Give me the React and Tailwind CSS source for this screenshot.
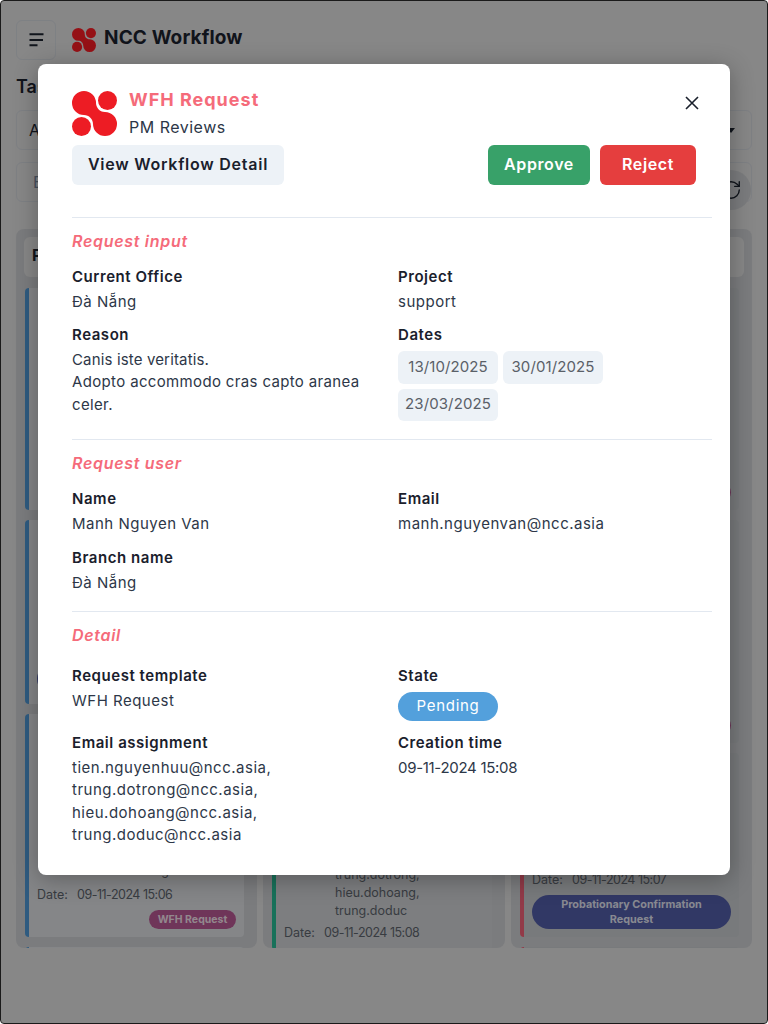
import { RefreshCw } from 'lucide-react'

function Logo({ size }) {
  return (
    <svg width={size} height={size} viewBox="0 0 45 45" className="shrink-0" fill="#ed1c24">
      <path d="M12 0A12 12 0 0 1 24 12C24 16 27 21 33 21A12 12 0 1 1 21 33C21 28 17 24 12 24A12 12 0 1 1 12 0Z" />
      <circle cx="35.5" cy="9.5" r="9.5" />
      <circle cx="9.5" cy="35.5" r="9.5" />
    </svg>
  )
}

const LEFT_ASSIGN = ['trung.dotrong,', 'trung.doduc,', 'tien.nguyenhuu,', 'hieu.dohoang']
const MID_ASSIGN = ['tien.nguyenhuu,', 'trung.dotrong,', 'hieu.dohoang,', 'trung.doduc']

// Only the lower part of each card shows past the dialog
function Card({ height, bar, bg, assign, assignGap = 'mb-[6px]', date, pill }) {
  return (
    <div className={`${height} ${bar} ${bg} shrink-0 rounded-[4px] border-l-4 px-2 pb-2 flex flex-col justify-end text-[12.5px] leading-[18px] text-[#5a5f68]`}>
      {assign && (
        <div className={`flex ${assignGap}`}>
          <span className="w-[51px]" />
          <div>{assign.map(a => <div key={a}>{a}</div>)}</div>
        </div>
      )}
      {date && (
        <div className="flex">
          <span className="w-[40px]">Date:</span>
          <span className="tracking-[-0.5px]">{date}</span>
        </div>
      )}
      {pill}
    </div>
  )
}

const WfhPill = (
  <div className="self-end mt-[6px] h-[19px] w-[87px] rounded-full bg-[#b0558e] text-center text-[10.5px] leading-[19px] font-bold text-[#e8d8e0]">WFH Request</div>
)
const ProbationPill = (
  <div className="mt-[6px] rounded-full bg-[#4f5aa0] px-4 py-[2px] text-center text-[10.8px] leading-[15px] font-bold text-[#d8dae6]">Probationary Confirmation Request</div>
)

function Field({ label, className = 'mb-[11px]', children }) {
  return (
    <div className={className}>
      <div className="text-[15px] leading-6 font-semibold tracking-[0.55px] text-[#1a202c]">{label}</div>
      <div className="mt-[2px] text-[15px] leading-[22.5px] tracking-[0.5px] text-[#2d3748]">{children}</div>
    </div>
  )
}

function DateTag({ className = '', children }) {
  return (
    <span className={`${className} flex w-[100px] items-center justify-center rounded-[6px] bg-[#edf2f7] text-[15px] tracking-[0.1px] text-[#5a6068]`}>
      {children}
    </span>
  )
}

function SectionTitle({ className = '', children }) {
  return (
    <h3 className={`${className} text-[16px] leading-6 font-semibold italic tracking-[0.7px] text-[#f56b7a]`}>{children}</h3>
  )
}

export default function App() {
  return (
    <div className="relative h-[1024px] w-[768px] overflow-hidden rounded-[4px] border border-[#1a1a1a] bg-[#d6d6d6] font-[Inter,sans-serif]">
      {/* Page behind the dialog */}
      <div className="flex h-full flex-col px-[15px] pt-[19px] text-[#1a202c]">
        <div className="flex items-center">
          <button className="flex h-10 w-10 items-center justify-center rounded-[6px] border border-[#c8ccd2]">
            <svg width="16" height="16" viewBox="0 0 16 16" fill="none" stroke="#1a202c" strokeWidth="2">
              <path d="M1.5 2.3h14M1.5 8h13.5M1.5 13.3h8" />
            </svg>
          </button>
          <div className="ml-4 flex items-center gap-2">
            <Logo size={24} />
            <span className="mb-1 text-[19px] font-bold tracking-[0.15px]">NCC Workflow</span>
          </div>
        </div>
        <h1 className="mt-[15px] text-[18px] leading-6 font-semibold">Tasks</h1>
        <div className="mt-[11px] flex h-10 items-center justify-between rounded-[6px] border border-[#c8ccd2] pl-3 pr-4 text-[16px]">
          <span>All</span>
          <svg width="8" height="5" viewBox="0 0 8 5" fill="#1a202c"><path d="M0 0h8L4 5Z" /></svg>
        </div>
        <div className="relative mt-3 flex h-10 items-center rounded-[6px] border border-[#c8ccd2] pl-4 text-[16px] text-[#718096]">
          <span>Email</span>
          <button className="absolute right-0 top-[7px] flex h-10 w-10 items-center justify-center rounded-full bg-[#c3c5c8] text-[#1a202c]">
            <RefreshCw size={22} strokeWidth={1.5} />
          </button>
        </div>
        <div className="mt-[27px] grid h-[719px] grid-cols-[241px_242px_241px] gap-[6px] overflow-hidden">
          <div className="flex flex-col gap-[10px] overflow-hidden rounded-[8px] bg-[#c3c5c8] pl-2 pr-[13px] pt-2">
            <div className="h-10 w-[225px] shrink-0 rounded-[6px] bg-[#d6d6d6] p-2 text-[16px] leading-[20px] font-bold">Pending</div>
            <div className="ml-px mt-px flex flex-col gap-[10px]">
              <Card height="h-[222px]" bar="border-[#4b91cb]" bg="bg-[#d3d5d8]" pill={WfhPill} />
              <Card height="h-[184px]" bar="border-[#4b91cb]" bg="bg-[#d3d5d8]" pill={ProbationPill} />
              <Card height="h-[223px]" bar="border-[#4b91cb]" bg="bg-[#d3d5d8]" assign={LEFT_ASSIGN} date="09-11-2024 15:06" pill={WfhPill} />
              <Card height="h-[200px]" bar="border-[#4b91cb]" bg="bg-[#d3d5d8]" />
            </div>
          </div>
          <div className="flex flex-col gap-[10px] overflow-hidden rounded-[8px] bg-[#c3c5c8] pl-2 pr-[13px] pt-2">
            <div className="h-10 w-[225px] shrink-0 rounded-[6px] bg-[#d6d6d6]" />
            <div className="ml-px mt-px flex h-[662px] shrink-0 flex-col justify-end">
              <Card height="h-[420px]" bar="border-[#27b38f]" bg="bg-[#c6c8cb]" assign={MID_ASSIGN} assignGap="mb-[4px]" date="09-11-2024 15:08" />
            </div>
          </div>
          <div className="flex flex-col gap-[10px] overflow-hidden rounded-[8px] bg-[#c3c5c8] pl-2 pr-[13px] pt-2">
            <div className="h-10 w-[225px] shrink-0 rounded-[6px] bg-[#d6d6d6]" />
            <div className="ml-px mt-px flex flex-col gap-[10px]">
              <Card height="h-[222px]" bar="border-[#e85c72]" bg="bg-[#bfc1c4]" pill={WfhPill} />
              <Card height="h-[223px]" bar="border-[#e85c72]" bg="bg-[#bfc1c4]" pill={WfhPill} />
              <Card height="h-[184px]" bar="border-[#e85c72]" bg="bg-[#bfc1c4]" date="09-11-2024 15:07" pill={ProbationPill} />
              <Card height="h-[200px]" bar="border-[#e85c72]" bg="bg-[#bfc1c4]" />
            </div>
          </div>
        </div>
      </div>

      {/* Overlay + dialog */}
      <div className="absolute inset-0 flex justify-center bg-black/37 pt-[63px]">
        <div className="relative h-[811px] w-[692px] rounded-[8px] bg-white pl-[34px] pt-[27px] pr-[18px] shadow-[0_4px_24px_rgba(0,0,0,0.3)]">
          <button className="absolute right-[26px] top-[27px] text-[#1a202c]">
            <svg width="24" height="24" viewBox="0 0 24 24" fill="none" stroke="currentColor" strokeWidth="1.6">
              <path d="M6 6l12 12M18 6L6 18" />
            </svg>
          </button>
          <div className="flex items-start gap-3">
            <Logo size={45} />
            <div>
              <h2 className="text-[18px] leading-[18px] font-bold tracking-[1px] text-[#f56b7a]">WFH Request</h2>
              <p className="mt-[9px] text-[16px] leading-[18px] tracking-[0.5px] text-[#2d3748]">PM Reviews</p>
            </div>
          </div>
          <div className="mt-[9px] mr-[16px] flex justify-between">
            <button className="h-10 w-[212px] rounded-[6px] bg-[#edf2f7] pb-[2px] text-[16px] font-semibold tracking-[0.75px] text-[#1a202c]">View Workflow Detail</button>
            <div className="flex gap-[10px]">
              <button className="h-10 w-[102px] rounded-[6px] bg-[#38a169] pb-[2px] text-[16px] font-semibold tracking-[0.6px] text-white">Approve</button>
              <button className="h-10 w-[96px] rounded-[6px] bg-[#e53e3e] pb-[2px] text-[16px] font-semibold tracking-[0.6px] text-white">Reject</button>
            </div>
          </div>

          <div className="mt-[32px] border-t border-[#e2e8f0] pt-[11px] pb-[18px]">
            <SectionTitle className="mb-[12px]">Request input</SectionTitle>
            <div className="grid grid-cols-[326px_1fr]">
              <div>
                <Field label="Current Office" className="mb-[9px]">Đà Nẵng</Field>
                <Field label="Reason" className="">
                  <span className="tracking-[0.15px]">Canis iste veritatis.</span>
                  <br />
                  <span className="tracking-[0.35px]">Adopto accommodo cras capto aranea celer.</span>
                </Field>
              </div>
              <div>
                <Field label="Project" className="mb-[9px]">support</Field>
                <div className="text-[15px] leading-6 font-semibold tracking-[0.55px] text-[#1a202c]">Dates</div>
                <div className="mt-[4px] flex w-[210px] flex-wrap gap-[5px]">
                  <DateTag className="h-[33px]">13/10/2025</DateTag>
                  <DateTag className="h-[33px]">30/01/2025</DateTag>
                  <DateTag className="h-[32px]">23/03/2025</DateTag>
                </div>
              </div>
            </div>
          </div>

          <div className="border-t border-[#e2e8f0] pt-[11px] pb-[16px]">
            <SectionTitle className="mb-[12px]">Request user</SectionTitle>
            <div className="grid grid-cols-[326px_1fr]">
              <Field label="Name">Manh Nguyen Van</Field>
              <Field label="Email">manh.nguyenvan@ncc.asia</Field>
              <Field label="Branch name" className="">Đà Nẵng</Field>
            </div>
          </div>

          <div className="border-t border-[#e2e8f0] pt-[11px]">
            <SectionTitle className="mb-[17px]">Detail</SectionTitle>
            <div className="grid grid-cols-[326px_1fr]">
              <Field label="Request template" className="">WFH Request</Field>
              <div>
                <div className="text-[15px] leading-6 font-semibold tracking-[0.55px] text-[#1a202c]">State</div>
                <div className="mt-[4px] flex h-[29px] w-[100px] items-center justify-center rounded-full bg-[#53a0dc] text-[15px] tracking-[0.7px] text-white">Pending</div>
              </div>
              <Field label="Email assignment" className="mt-[10px]">
                tien.nguyenhuu@ncc.asia,
                <br />
                trung.dotrong@ncc.asia,
                <br />
                hieu.dohoang@ncc.asia,
                <br />
                trung.doduc@ncc.asia
              </Field>
              <Field label="Creation time" className="mt-[10px]">
                <span className="tracking-[-0.3px]">09-11-2024 15:08</span>
              </Field>
            </div>
          </div>
        </div>
      </div>
    </div>
  )
}
